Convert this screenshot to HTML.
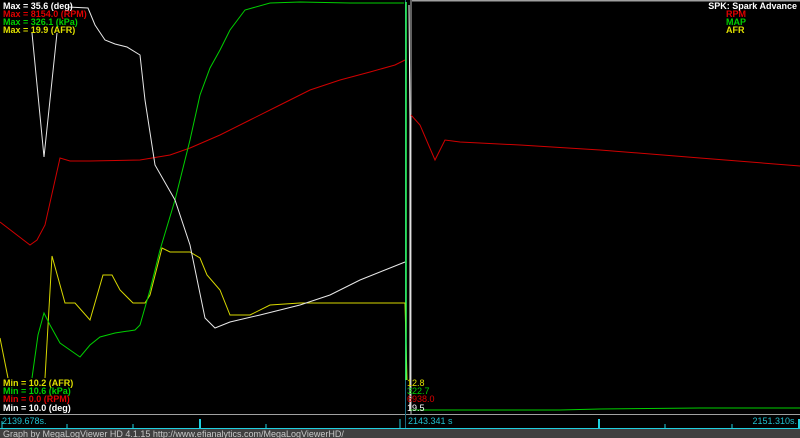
<!DOCTYPE html>
<html><head><style>
html,body{margin:0;padding:0;background:#000;width:800px;height:438px;overflow:hidden}
svg{display:block}
text{font-family:"Liberation Sans",sans-serif;font-size:9px;font-weight:bold}
.n{font-weight:normal}
</style></head><body>
<svg width="800" height="438" viewBox="0 0 800 438" xmlns="http://www.w3.org/2000/svg">
<rect width="800" height="438" fill="#000"/>
<line x1="412" y1="0.5" x2="800" y2="0.5" stroke="#a0a0a0" stroke-width="2"/>
<line x1="405.5" y1="0" x2="405.5" y2="414" stroke="#1a6a80" stroke-width="1"/>
<line x1="411" y1="0" x2="411" y2="414" stroke="#c0c0c0" stroke-width="1"/>
<!-- RPM red -->
<polyline fill="none" stroke="#d00000" stroke-width="1" points="0,222 30,245 37,240 45,225 60,158 70,161 90,161 140,160 170,155 190,148 220,135 250,120 280,105 310,90 340,80 370,72 395,65 405,60"/>
<polyline fill="none" stroke="#d00000" stroke-width="1" points="411,115 420,125 435,160 445,140 460,142 520,145 600,150 700,158 800,166"/>
<!-- AFR yellow -->
<polyline fill="none" stroke="#d8d800" stroke-width="1" points="0,338 8,378"/>
<polyline fill="none" stroke="#d8d800" stroke-width="1" points="45,378 52,256 65,303 75,303 90,320 103,275 112,275 120,290 133,303 145,303 150,295 162,248 170,252 190,252 200,258 207,275 220,290 230,315 250,315 270,305 300,303 350,303 405,303 407,380"/>
<!-- MAP green -->
<polyline fill="none" stroke="#00d000" stroke-width="1" points="32,378 38,335 44,313 50,325 60,343 80,357 90,345 100,337 115,333 135,330 140,325 150,290 160,250 175,200 190,140 200,95 210,68 220,50 230,30 245,10 270,3 300,2 350,3 404,3"/>
<polyline fill="none" stroke="#00d000" stroke-width="1" points="410,410 560,410 600,409 700,408 800,408"/>
<line x1="406" y1="2" x2="406" y2="380" stroke="#30ff60" stroke-width="1.5"/>
<!-- SPK white -->
<polyline fill="none" stroke="#e8e8e8" stroke-width="1" points="68,7 88,8 95,25 105,40 115,44 127,47 140,55 145,100 155,165 175,200 190,245 205,318 215,328 230,322 260,315 300,305 330,295 360,280 390,268 405,262"/>
<polyline fill="none" stroke="#e8e8e8" stroke-width="1" points="32,33 44,157 57,33"/>
<polyline fill="none" stroke="#ffffff" stroke-width="1" points="409,5 410,120 410,410"/>
<!-- labels -->
<text x="3" y="9" fill="#fff">Max = 35.6 (deg)</text>
<text x="3" y="17" fill="#e00000">Max = 8154.0 (RPM)</text>
<text x="3" y="25" fill="#00d000">Max = 326.1 (kPa)</text>
<text x="3" y="33" fill="#e0e000">Max = 19.9 (AFR)</text>
<text x="797" y="9" fill="#fff" text-anchor="end">SPK: Spark Advance</text>
<text x="726" y="17" fill="#e00000">RPM</text>
<text x="726" y="25" fill="#00d000">MAP</text>
<text x="726" y="33" fill="#e0e000">AFR</text>
<text x="3" y="386" fill="#e0e000">Min = 10.2 (AFR)</text>
<text x="3" y="394" fill="#00d000">Min = 10.6 (kPa)</text>
<text x="3" y="402" fill="#e00000">Min = 0.0 (RPM)</text>
<text x="3" y="411" fill="#fff">Min = 10.0 (deg)</text>
<text class="n" x="407" y="386" fill="#e0e000">12.8</text>
<text class="n" x="407" y="394" fill="#00d000">322.7</text>
<text class="n" x="407" y="402" fill="#e00000">6938.0</text>
<text class="n" x="407" y="411" fill="#fff">19.5</text>
<line x1="0" y1="414.5" x2="800" y2="414.5" stroke="#a0a0a0" stroke-width="1"/>
<line x1="405.5" y1="414" x2="405.5" y2="428" stroke="#1a6a80"/>
<text class="n" x="2" y="424" fill="#20c0d0">2139.678s.</text>
<text class="n" x="408" y="424" fill="#20c0d0">2143.341 s</text>
<text class="n" x="797" y="424" fill="#20c0d0" text-anchor="end">2151.310s.</text>
<g stroke="#20d0e0" stroke-width="1">
<line x1="2" y1="421" x2="2" y2="428"/>
<line x1="67" y1="424" x2="67" y2="428"/>
<line x1="133" y1="424" x2="133" y2="428"/>
<line x1="200" y1="419" x2="200" y2="428" stroke-width="2"/>
<line x1="266" y1="424" x2="266" y2="428"/>
<line x1="400" y1="419" x2="400" y2="428"/>
<line x1="599" y1="419" x2="599" y2="428" stroke-width="2"/>
<line x1="665" y1="424" x2="665" y2="428"/>
<line x1="732" y1="424" x2="732" y2="428"/>
<line x1="799" y1="419" x2="799" y2="428" stroke-width="2"/>
</g>
<line x1="0" y1="428.5" x2="800" y2="428.5" stroke="#20d0e0" stroke-width="1"/>
<rect x="0" y="429" width="800" height="9" fill="#404040"/>
<text class="n" x="3" y="437" fill="#c8c8c8">Graph by MegaLogViewer HD 4.1.15 http://www.efianalytics.com/MegaLogViewerHD/</text>
</svg>
</body></html>
